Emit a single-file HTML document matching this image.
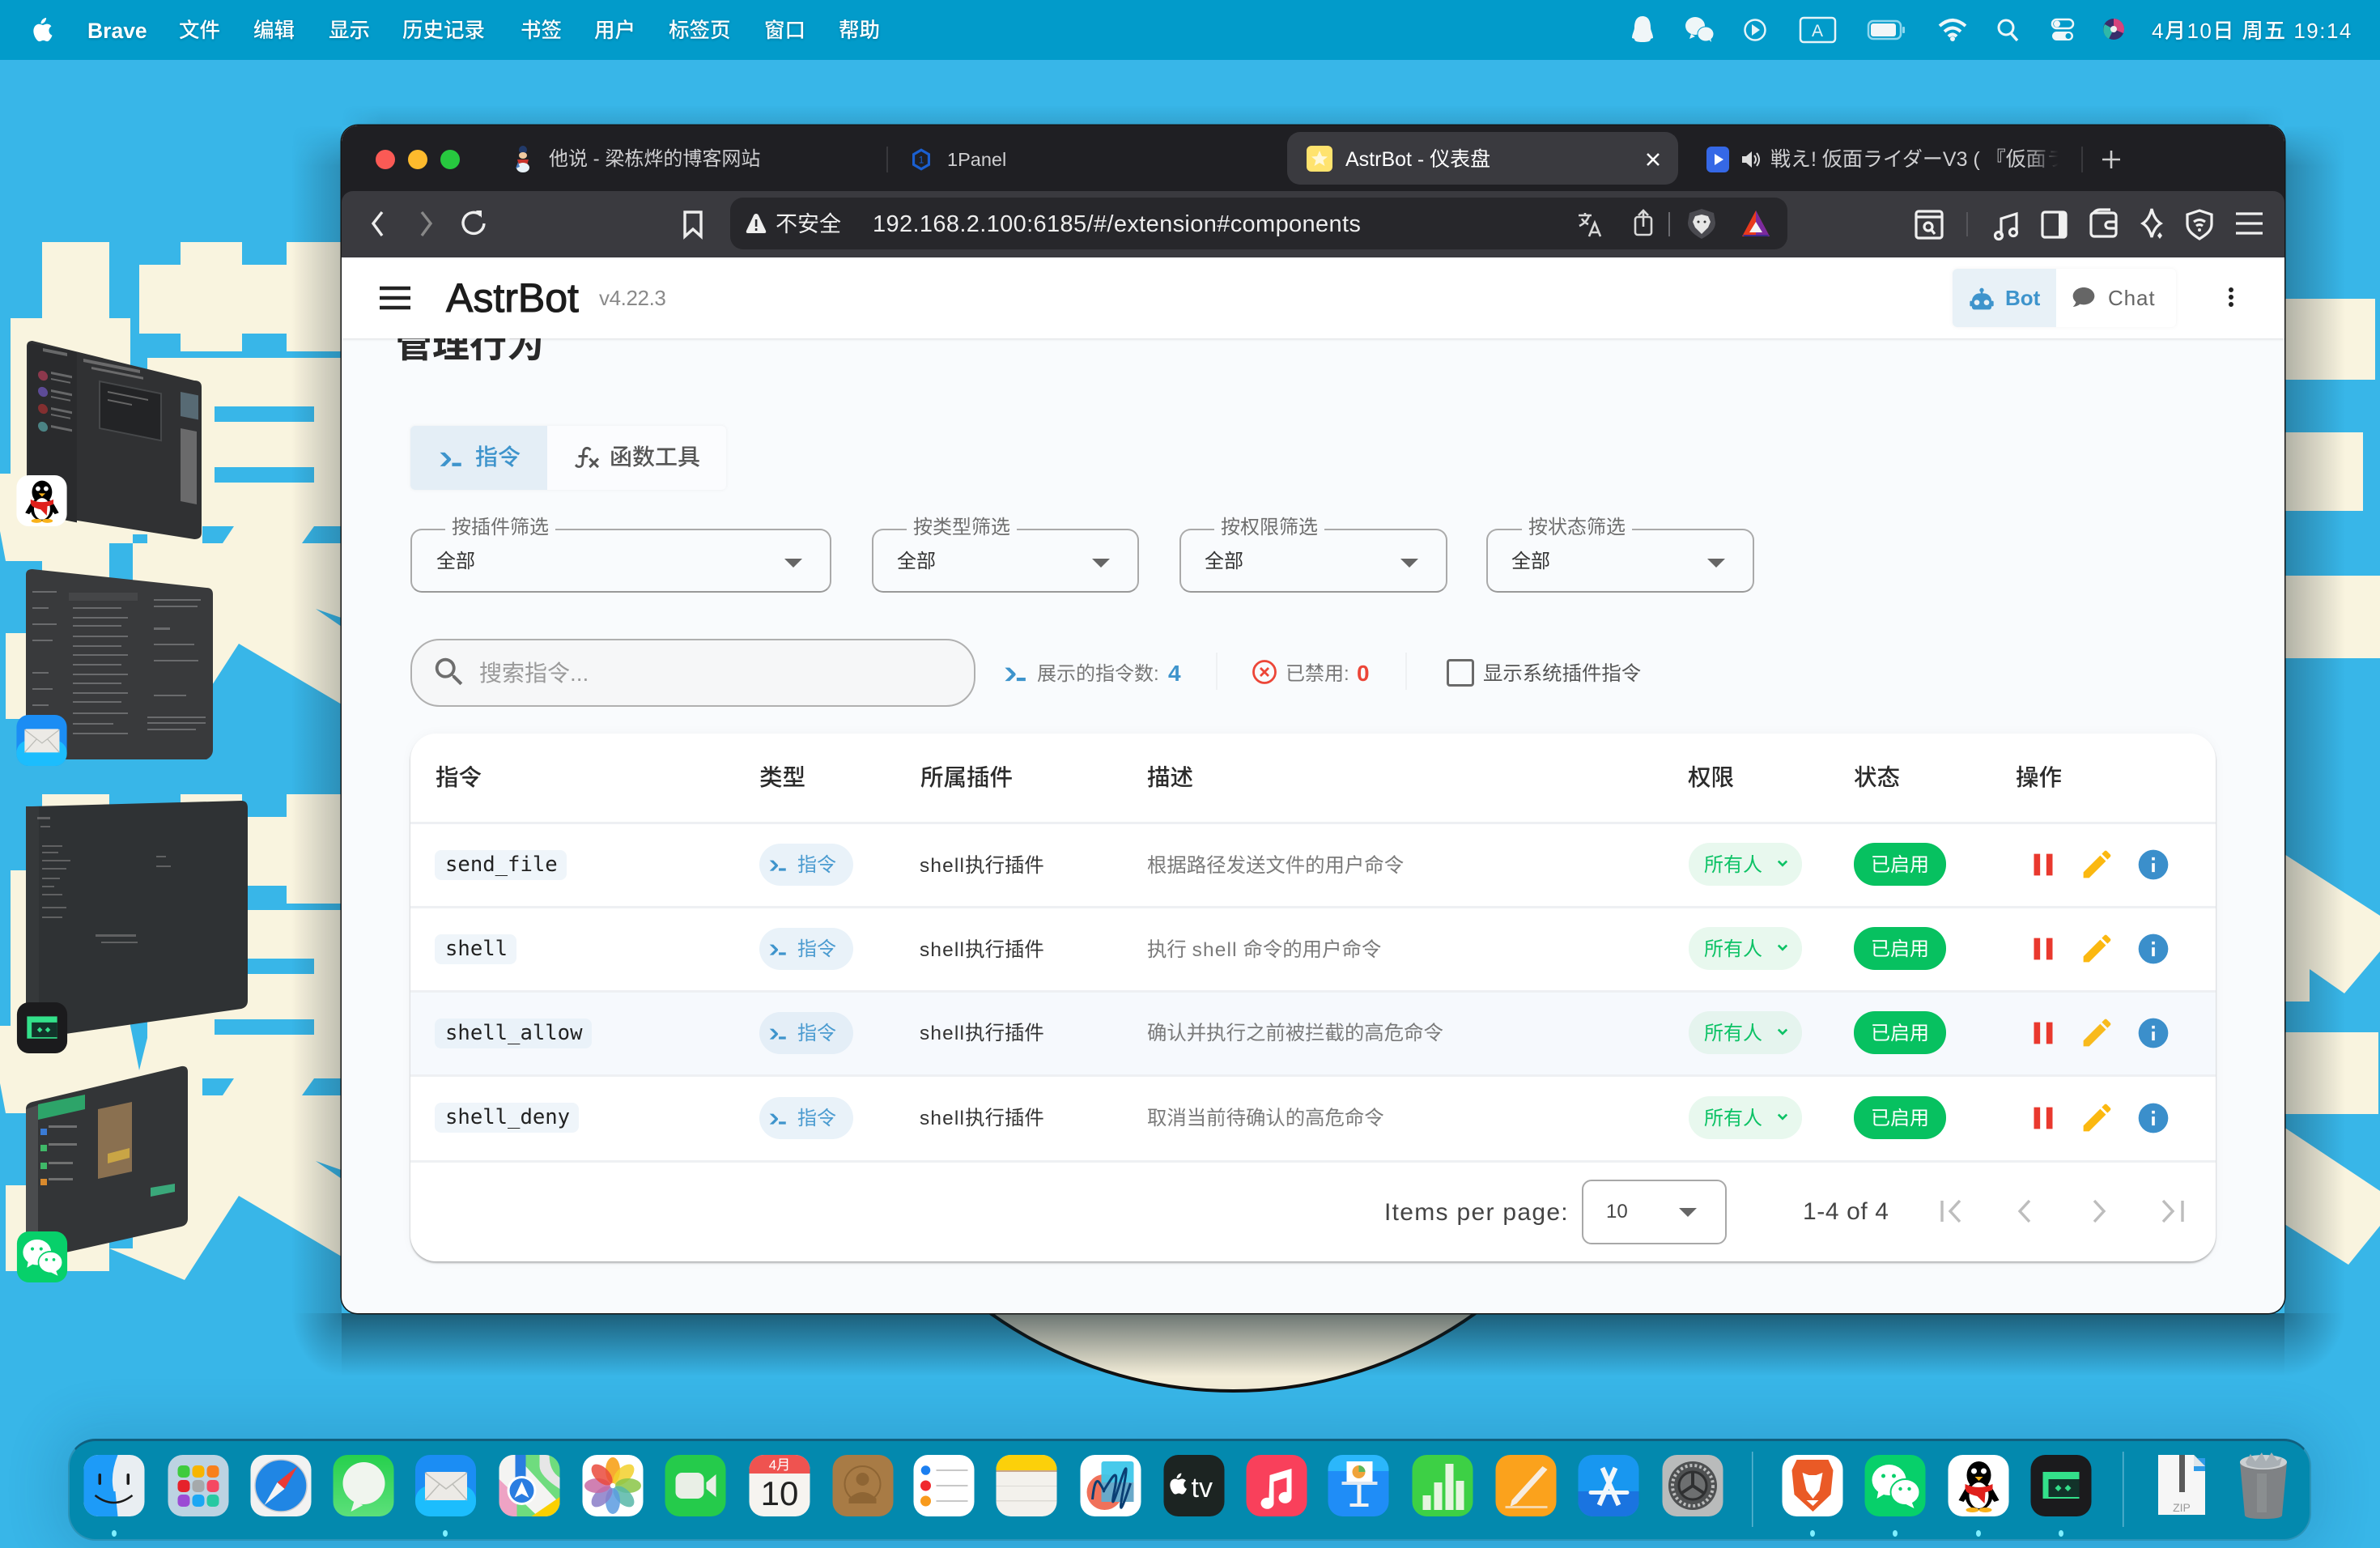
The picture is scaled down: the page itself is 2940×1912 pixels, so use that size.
<!DOCTYPE html>
<html lang="zh"><head><meta charset="utf-8"><title>AstrBot</title>
<style>
html,body{margin:0;padding:0;background:#38b6e8;}
body{position:relative;width:2940px;height:1912px;overflow:hidden;font-family:"Liberation Sans","Noto Sans CJK SC",sans-serif;}
.a{position:absolute;}
.t{position:absolute;white-space:nowrap;line-height:40px;height:40px;}
.mb{color:#fff;font-size:25.5px;font-weight:500;top:18px;text-shadow:0 1px 3px rgba(0,0,0,.25);}
.tab{font-size:24px;color:#cfcfd1;top:177px;}
.lbl{font-size:24px;color:#6f6f6f;top:635px;height:34px;line-height:34px;background:#f9fbfd;padding:0 8px;}
.val{font-size:24px;color:#333;top:674px;}
.sel{position:absolute;top:653px;height:79px;box-sizing:border-box;border:2px solid #aaa;border-bottom-color:#999;border-radius:14px;}
.arr{position:absolute;width:0;height:0;border-left:11px solid transparent;border-right:11px solid transparent;border-top:11px solid #666;top:690px;}
.th{font-size:28.5px;color:#2b2b2b;font-weight:500;top:941px;}
.code{position:absolute;height:37px;line-height:37px;background:#eff5fa;border-radius:8px;font-family:"DejaVu Sans Mono",monospace;font-size:25.6px;color:#222;padding:0 13px;box-sizing:border-box;left:537px;}
.chip{position:absolute;left:938px;width:116px;height:52px;border-radius:26px;background:#e9f2f9;color:#4a9bd0;font-size:24px;line-height:54px;}
.chip span{position:absolute;left:47px;top:0;}
.chip svg{position:absolute;left:10px;top:13px;}
.pl{font-size:24.4px;color:#333;left:1136px;}
.pl i{font-style:normal;letter-spacing:1.2px;}
.de{font-size:24.4px;color:#7a7a7a;left:1417px;}
.perm{position:absolute;left:2086px;width:140px;height:53px;border-radius:26px;background:#e8f8ee;color:#0cc265;font-size:24px;line-height:55px;}
.perm span{position:absolute;left:19px;top:0;}
.perm svg{position:absolute;left:108px;top:20px;}
.st{position:absolute;left:2290px;width:114px;height:53px;border-radius:26px;background:#07c160;color:#fff;font-size:24px;line-height:55px;text-align:center;}
.ic{position:absolute;}
.hl{position:absolute;left:507px;width:2230px;height:3px;background:#eef0f3;}
</style></head><body>

<svg width="0" height="0" style="position:absolute"><defs>
<symbol id="console" viewBox="0 0 24 24"><path d="M13,19V16H21V19H13M8.5,13L2.47,7H6.71L11.67,11.95C12.25,12.54 12.25,13.5 11.67,14.07L6.74,19H2.5L8.5,13Z"/></symbol>
<symbol id="pause" viewBox="0 0 24 24"><path d="M14,19H18V5H14M6,19H10V5H6V19Z"/></symbol>
<symbol id="pencil" viewBox="0 0 24 24"><path d="M20.71,7.04C21.1,6.65 21.1,6 20.71,5.63L18.37,3.29C18,2.9 17.35,2.9 16.96,3.29L15.12,5.12L18.87,8.87M3,17.25V21H6.75L17.81,9.93L14.06,6.18L3,17.25Z"/></symbol>
<symbol id="info" viewBox="0 0 24 24"><path d="M13,9H11V7H13M13,17H11V11H13M12,2A10,10 0 0,0 2,12A10,10 0 0,0 12,22A10,10 0 0,0 22,12A10,10 0 0,0 12,2Z"/></symbol>
<symbol id="chev" viewBox="0 0 12 10"><path d="M2 2l4 4 4-4" fill="none" stroke="#0cc265" stroke-width="2"/></symbol>
<symbol id="apple" viewBox="0 0 24 24"><path d="M12.2 5.3c.8-1 1.3-2.2 1.2-3.3-1.1 0-2.4.7-3.2 1.6-.7.8-1.3 2.1-1.2 3.2 1.2.1 2.4-.6 3.2-1.5zM15.6 12.4c0-2.3 1.9-3.4 2-3.5-1.1-1.6-2.8-1.8-3.4-1.8-1.4-.1-2.8.9-3.5.9-.7 0-1.9-.8-3.1-.8-1.6 0-3.1.9-3.9 2.4-1.7 2.9-.4 7.1 1.2 9.5.8 1.1 1.7 2.4 3 2.3 1.2 0 1.7-.8 3.1-.8 1.5 0 1.9.8 3.1.8 1.3 0 2.1-1.1 2.9-2.3.9-1.3 1.3-2.6 1.3-2.7-.1 0-2.7-1-2.7-4z"/></symbol>
<symbol id="qq" viewBox="0 0 75 76"><rect width="75" height="76" rx="18" fill="#fff"/><ellipse cx="38" cy="25" rx="15" ry="17" fill="#000"/><ellipse cx="38" cy="50" rx="17" ry="18" fill="#000"/><ellipse cx="38" cy="50" rx="12" ry="16" fill="#fff"/><path d="M21 36q17 8 34 0l0 7q-6 3-9 3l-1 14-9-9q-10-2-15-7z" fill="#e0201c"/><path d="M33 27h10l-5 5z" fill="#f9b21a"/><circle cx="32" cy="20" r="3.5" fill="#fff"/><circle cx="44" cy="20" r="3.5" fill="#fff"/><path d="M21 42l-8 14 6 2 6-8zM55 42l8 14-6 2-6-8z" fill="#000"/><ellipse cx="30" cy="68" rx="8" ry="3" fill="#f9b21a"/><ellipse cx="46" cy="68" rx="8" ry="3" fill="#f9b21a"/></symbol>
<symbol id="wechat" viewBox="0 0 75 76"><rect width="75" height="76" rx="18" fill="#07d06a"/><ellipse cx="30" cy="31" rx="21" ry="19" fill="#fff"/><path d="M17 44l-2 10 10-6z" fill="#fff"/><ellipse cx="50" cy="46" rx="18" ry="16" fill="#fff" stroke="#07d06a" stroke-width="2"/><path d="M58 58l3 8-10-5z" fill="#fff"/><circle cx="23" cy="26" r="2.5" fill="#07d06a"/><circle cx="36" cy="26" r="2.5" fill="#07d06a"/><circle cx="44" cy="42" r="2.2" fill="#07d06a"/><circle cx="55" cy="42" r="2.2" fill="#07d06a"/></symbol>
<symbol id="mail" viewBox="0 0 75 76"><rect width="75" height="76" rx="18" fill="#1b8df4"/><rect y="38" width="75" height="38" rx="18" fill="#1cbdfd"/><rect x="12" y="21" width="52" height="35" rx="3" fill="#eceae6"/><path d="M12 22l26 20 26-20M12 56l18-20M64 56l-18-20" fill="none" stroke="#bdbdb8" stroke-width="1.5"/></symbol>
<symbol id="term" viewBox="0 0 75 76"><rect width="75" height="76" rx="18" fill="#1b1b1d"/><rect x="15" y="21" width="45" height="33" fill="#33e08a"/><rect x="22" y="30" width="38" height="22" fill="#12332a"/><path d="M30 41l4-4 4 4-4 4zM42 41l4-4 4 4-4 4z" fill="#33e08a"/></symbol>
</defs></svg>

<!-- WALLPAPER -->
<svg class="a" style="left:0;top:0" width="2940" height="1912" viewBox="0 0 2940 1912">
<defs>
<g id="sec" fill="#f9f4df">
<rect x="52" y="299" width="83" height="100"/>
<rect x="13" y="393" width="148" height="192"/>
<path d="M0 585H161L172 640L182 600V660H164V671H135V720H52V693H7L0 656Z"/>
<rect x="52" y="660" width="83" height="60"/>
<rect x="7" y="782" width="128" height="106"/>
<path d="M135 860L228 899L295 795L422 870V671H164V860Z"/>
<rect x="172" y="327" width="260" height="85"/>
<rect x="223" y="299" width="76" height="135"/>
<rect x="354" y="299" width="80" height="135"/>
<rect x="182" y="442" width="250" height="230"/>
<g fill="#38b6e8">
<rect x="265" y="502" width="123" height="19"/>
<rect x="265" y="577" width="123" height="19"/>
<path d="M250 650H289L275 671H250Z"/>
<path d="M388 650H430V671H373Z"/>
<path d="M390 752L430 766V774H422Z"/>
</g>
</g>
</defs>
<rect width="2940" height="1912" fill="#38b6e8"/>
<use href="#sec"/>
<use href="#sec" y="682"/>
<g fill="#f9f4df">
<rect x="2800" y="369" width="134" height="100"/>
<rect x="2800" y="534" width="119" height="97"/>
<rect x="2800" y="711" width="140" height="102"/>
<path d="M2800 1041L2940 1131V1175L2896 1227L2853 1197V1237H2800Z"/>
<rect x="2800" y="1275" width="138" height="101"/>
<path d="M2800 1378L2940 1471V1514L2901 1562L2800 1498Z"/>
</g>
<circle cx="1523" cy="1203" r="515" fill="#f3edd8" stroke="#111" stroke-width="4"/>

<!-- stage manager thumbnails -->
<path d="M40 421Q33 421 33 428V633L240 666Q249 666 249 658V478Q249 470 240 470Z" fill="#303133"/>
<g transform="matrix(1 .2 0 1 33 421)">
<rect x="2" y="2" width="60" height="210" fill="#2a2b2d"/>
<g fill="#9a9a9a" opacity=".55">
<rect x="20" y="5" width="30" height="4"/><circle cx="20" cy="39" r="6" fill="#d46"/><rect x="30" y="32" width="26" height="3"/><rect x="30" y="40" width="24" height="2"/>
<circle cx="20" cy="59" r="6" fill="#86e"/><rect x="30" y="54" width="26" height="3"/><rect x="30" y="62" width="24" height="2"/>
<circle cx="20" cy="80" r="6" fill="#c33"/><rect x="30" y="76" width="26" height="3"/><rect x="30" y="84" width="24" height="2"/>
<circle cx="20" cy="102" r="6" fill="#6cc"/><rect x="30" y="98" width="26" height="3"/>
<rect x="70" y="8" width="70" height="4"/><rect x="80" y="16" width="64" height="3"/>
<rect x="190" y="25" width="22" height="30" fill="#79a"/><rect x="190" y="70" width="20" height="90"/>
</g>
<rect x="90" y="32" width="76" height="58" fill="#232426" stroke="#46484a" stroke-width="2"/>
<rect x="100" y="42" width="50" height="2" fill="#666"/>
<rect x="100" y="52" width="30" height="2" fill="#666"/>
</g>
<path d="M40 703Q32 703 32 710V938H255Q263 934 263 926V734Q263 726 255 726Z" fill="#393a3c"/>
<g fill="#8b8d8f" opacity=".6">
<rect x="85" y="732" width="85" height="10" fill="#4d4f51"/>
<rect x="90" y="750" width="60" height="2"/><rect x="90" y="762" width="68" height="2"/><rect x="90" y="772" width="60" height="2"/><rect x="90" y="785" width="68" height="2"/><rect x="90" y="797" width="60" height="2"/><rect x="90" y="808" width="68" height="2"/><rect x="90" y="820" width="60" height="2"/><rect x="90" y="832" width="68" height="2"/><rect x="90" y="843" width="60" height="2"/><rect x="90" y="855" width="68" height="2"/><rect x="90" y="866" width="60" height="2"/><rect x="90" y="880" width="68" height="2"/><rect x="90" y="893" width="50" height="2"/><rect x="90" y="905" width="68" height="2"/>
<rect x="190" y="740" width="58" height="2"/><rect x="190" y="748" width="54" height="2"/><rect x="190" y="775" width="20" height="3"/><rect x="190" y="795" width="50" height="2"/><rect x="190" y="815" width="55" height="2"/><rect x="190" y="858" width="40" height="2"/><rect x="182" y="885" width="72" height="2"/><rect x="182" y="892" width="72" height="2"/><rect x="182" y="900" width="60" height="2"/>
<rect x="40" y="730" width="30" height="2"/><rect x="40" y="750" width="20" height="2"/><rect x="40" y="770" width="30" height="2"/><rect x="40" y="790" width="25" height="2"/><rect x="40" y="830" width="20" height="2"/><rect x="40" y="850" width="25" height="2"/><rect x="40" y="870" width="20" height="2"/>
</g>
<path d="M40 996Q32 996 32 1003V1284L298 1246Q306 1244 306 1236V998Q306 989 298 989Z" fill="#2f3234"/>
<rect x="32" y="996" width="16" height="288" fill="#35383a"/>
<g fill="#888" opacity=".55">
<rect x="46" y="1009" width="16" height="3"/><rect x="50" y="1020" width="12" height="2"/><rect x="52" y="1044" width="25" height="2"/><rect x="52" y="1052" width="20" height="2"/><rect x="52" y="1062" width="35" height="2"/><rect x="52" y="1072" width="30" height="2"/><rect x="52" y="1084" width="22" height="2"/><rect x="52" y="1094" width="15" height="2"/><rect x="52" y="1104" width="25" height="2"/><rect x="52" y="1120" width="30" height="2"/><rect x="52" y="1132" width="25" height="2"/>
<rect x="118" y="1154" width="50" height="3"/><rect x="125" y="1163" width="45" height="2"/><rect x="193" y="1057" width="12" height="2"/><rect x="193" y="1069" width="18" height="2"/>
</g>
<path d="M40 1361Q32 1363 32 1370V1558L224 1515Q232 1513 232 1505V1324Q232 1316 224 1317Z" fill="#333537"/>
<path d="M32 1370L47 1365V1553L32 1558Z" fill="#4a4c4e"/>
<path d="M47 1364L105 1352V1370L47 1383Z" fill="#2da469"/>
<path d="M121 1370L163 1361V1447L121 1456Z" fill="#8a7050"/>
<path d="M133 1425L160 1418V1430L133 1437Z" fill="#c9a545"/>
<path d="M186 1467L216 1462V1472L186 1478Z" fill="#3aa87a"/>
<g fill="#999" opacity=".6"><rect x="60" y="1390" width="35" height="3"/><rect x="60" y="1412" width="35" height="3"/><rect x="60" y="1435" width="30" height="3"/><rect x="60" y="1455" width="30" height="3"/></g>
<g><rect x="50" y="1394" width="8" height="8" fill="#3a7bd5"/><rect x="50" y="1414" width="8" height="8" fill="#3fb868"/><rect x="50" y="1436" width="8" height="8" fill="#3fb868"/><rect x="50" y="1456" width="8" height="8" fill="#d98a2d"/></g>
<use href="#qq" x="20" y="587" width="63" height="63"/>
<use href="#mail" x="20" y="883" width="63" height="63"/>
<use href="#term" x="20" y="1238" width="64" height="63"/>
<use href="#wechat" x="20" y="1521" width="64" height="63"/>
</svg>

<!-- MENU BAR -->
<div class="a" style="left:0;top:0;width:2940px;height:74px;background:#029bca"></div>
<svg class="ic" style="left:37px;top:18px;fill:#fff" width="36" height="38"><use href="#apple"/></svg>
<div class="t mb" style="left:108px;font-weight:700;font-size:26.5px">Brave</div>
<div class="t mb" style="left:221px">文件</div>
<div class="t mb" style="left:313px">编辑</div>
<div class="t mb" style="left:406px">显示</div>
<div class="t mb" style="left:497px">历史记录</div>
<div class="t mb" style="left:643px">书签</div>
<div class="t mb" style="left:734px">用户</div>
<div class="t mb" style="left:826px">标签页</div>
<div class="t mb" style="left:944px">窗口</div>
<div class="t mb" style="left:1036px">帮助</div>
<svg class="a" style="left:2000px;top:10px" width="660" height="56" viewBox="2000 10 660 56">
<path d="M2029 20c7 0 10 6 10 14 0 4 3 8 3 13l-3 1c0 3-3 4-10 4s-10-1-10-4l-3-1c0-5 3-9 3-13 0-8 3-14 10-14z" fill="#f0f6f8"/>
<ellipse cx="2094" cy="32" rx="12" ry="11" fill="#eef6f8"/><ellipse cx="2107" cy="42" rx="10" ry="9" fill="#eef6f8" stroke="#029bca"/>
<path d="M2089 42l-2 6 7-3M2111 49l3 3-1-6" fill="#eef6f8"/>
<circle cx="2168" cy="37" r="12.5" fill="none" stroke="#e6f4f8" stroke-width="2.5"/><path d="M2164 30l10 7-10 7z" fill="#e6f4f8"/>
<rect x="2224" y="22" width="43" height="30" rx="4" fill="none" stroke="#e6f4f8" stroke-width="2.5"/><text x="2245" y="45" font-size="21" fill="#e6f4f8" text-anchor="middle" font-family="Liberation Sans">A</text>
<rect x="2308" y="26" width="40" height="22" rx="6" fill="none" stroke="#8fd7ee" stroke-width="2.5"/><rect x="2311" y="29" width="31" height="16" rx="3" fill="#f0f6f8"/><rect x="2350" y="33" width="3" height="8" rx="1" fill="#8fd7ee"/>
<path d="M2396 32q16-14 32 0M2402 39q10-9 20 0M2407 45q5-5 10 0" fill="none" stroke="#f0f6f8" stroke-width="4"/><circle cx="2412" cy="48" r="3" fill="#f0f6f8"/>
<circle cx="2478" cy="34" r="9" fill="none" stroke="#f0f6f8" stroke-width="3"/><path d="M2484 41l8 9" stroke="#f0f6f8" stroke-width="3.5"/>
<rect x="2535" y="24" width="26" height="11" rx="5.5" fill="none" stroke="#f0f6f8" stroke-width="2.5"/><circle cx="2541" cy="29.5" r="4" fill="#f0f6f8"/><rect x="2535" y="39" width="26" height="11" rx="5.5" fill="#f0f6f8"/><circle cx="2555" cy="44.5" r="3.5" fill="#029bca"/>
<circle cx="2611" cy="36" r="13" fill="#3a2d6b"/><path d="M2611 23a13 13 0 0 1 12 18l-12-5z" fill="#d6447c"/><path d="M2600 30a13 13 0 0 0 5 18l6-12z" fill="#2fb8a8"/><circle cx="2611" cy="36" r="4" fill="#eee"/>
</svg>
<div class="t mb" style="left:2658px;font-size:26px;letter-spacing:1.5px">4月10日 周五 19:14</div>

<!-- WINDOW SHADOW (soft-ended gradients) -->
<div class="a" style="left:422px;top:1622px;width:2400px;height:78px;background:linear-gradient(180deg,rgba(8,30,40,.58),rgba(8,30,40,0))"></div>
<div class="a" style="left:360px;top:155px;width:62px;height:1467px;background:linear-gradient(270deg,rgba(8,20,30,.24),rgba(8,20,30,0));-webkit-mask-image:linear-gradient(180deg,transparent,#000 50px);mask-image:linear-gradient(180deg,transparent,#000 50px)"></div>
<div class="a" style="left:2822px;top:155px;width:75px;height:1467px;background:linear-gradient(90deg,rgba(8,20,30,.3),rgba(8,20,30,0));-webkit-mask-image:linear-gradient(180deg,transparent,#000 50px);mask-image:linear-gradient(180deg,transparent,#000 50px)"></div>
<div class="a" style="left:360px;top:1622px;width:62px;height:78px;background:radial-gradient(ellipse 62px 78px at 100% 0,rgba(8,25,35,.38),rgba(8,25,35,0))"></div>
<div class="a" style="left:2822px;top:1622px;width:75px;height:78px;background:radial-gradient(ellipse 75px 78px at 0 0,rgba(8,25,35,.42),rgba(8,25,35,0))"></div>
<div class="a" style="left:422px;top:130px;width:2400px;height:25px;background:linear-gradient(0deg,rgba(8,20,30,.12),rgba(8,20,30,0));-webkit-mask-image:linear-gradient(90deg,transparent,#000 50px,#000 calc(100% - 50px),transparent);mask-image:linear-gradient(90deg,transparent,#000 50px,#000 calc(100% - 50px),transparent)"></div>

<!-- WINDOW -->
<div class="a" style="left:422px;top:155px;width:2400px;height:1467px;border-radius:20px;box-shadow:0 0 0 1.5px #151515;"></div>
<div class="a" style="left:422px;top:155px;width:2400px;height:1467px;border-radius:20px;overflow:hidden;background:#f9fbfd;">
<div class="a" style="left:-422px;top:-155px;width:2940px;height:1912px;">

<div class="a" style="left:422px;top:155px;width:2400px;height:110px;background:#1f1f23"></div>
<div class="a" style="left:422px;top:236px;width:2400px;height:82px;background:#3a3a3f;border-radius:14px 14px 0 0"></div>
<div class="a" style="left:464px;top:185px;width:24px;height:24px;border-radius:50%;background:#fb5a55"></div>
<div class="a" style="left:504px;top:185px;width:24px;height:24px;border-radius:50%;background:#fdba2d"></div>
<div class="a" style="left:544px;top:185px;width:24px;height:24px;border-radius:50%;background:#27c83f"></div>

<svg class="a" style="left:632px;top:178px" width="28" height="36" viewBox="0 0 28 36"><circle cx="14" cy="7" r="5" fill="#223a6a"/><ellipse cx="14" cy="14" rx="5" ry="4" fill="#f0c9a0"/><path d="M7 19h14l-2 7H9z" fill="#c8342c"/><ellipse cx="14" cy="29" rx="8" ry="6" fill="#e8f2f8"/><path d="M8 22l-3 8 5-2z" fill="#4a7ec0"/></svg>
<div class="t tab" style="left:678px">他说 - 梁栋烨的博客网站</div>
<div class="a" style="left:1095px;top:181px;width:2px;height:32px;background:#38383c"></div>
<svg class="a" style="left:1127px;top:181px" width="22" height="32" viewBox="0 0 28 34"><path d="M14 2L26 9V25L14 32L2 25V9Z" fill="none" stroke="#1a5fd0" stroke-width="4"/><text x="14" y="23" font-size="15" fill="#1a5fd0" text-anchor="middle" font-family="Liberation Sans">1</text></svg>
<div class="t tab" style="left:1170px;font-size:23.5px">1Panel</div>

<div class="a" style="left:1590px;top:163px;width:483px;height:65px;background:#3a3a3f;border-radius:16px"></div>
<svg class="a" style="left:1614px;top:180px" width="32" height="32" viewBox="0 0 32 32"><rect width="32" height="32" rx="6" fill="#ffe36e"/><path d="M16 6l3 7 7 .5-5.5 4.5 2 7-6.500-4-6.500 4 2-7L6 13.500l7-.5z" fill="#fff8d8"/></svg>
<div class="t tab" style="left:1662px;color:#fff;font-size:25px">AstrBot - 仪表盘</div>
<svg class="a" style="left:2033px;top:187px" width="18" height="20"><path d="M2 3l14 14M16 3L2 17" stroke="#fff" stroke-width="2.6"/></svg>

<svg class="a" style="left:2108px;top:181px" width="28" height="32" viewBox="0 0 28 32"><rect width="28" height="32" rx="6" fill="#3568e6"/><path d="M10 9l11 7-11 7z" fill="#fff"/></svg>
<svg class="a" style="left:2150px;top:184px" width="26" height="26" viewBox="0 0 26 26"><path d="M2 9h5l7-6v20l-7-6H2z" fill="#ddd"/><path d="M17 8q4 5 0 10M20 5q6 8 0 16" fill="none" stroke="#ddd" stroke-width="2"/></svg>
<div class="t tab" style="left:2187px;width:356px;overflow:hidden;font-size:25px;-webkit-mask-image:linear-gradient(90deg,#000 88%,transparent);mask-image:linear-gradient(90deg,#000 88%,transparent);font-family:'Liberation Sans','Noto Sans CJK JP',sans-serif">戦え! 仮面ライダーV3 ( 『仮面ライダー</div>
<div class="a" style="left:2571px;top:181px;width:2px;height:32px;background:#38383c"></div>
<svg class="a" style="left:2596px;top:184px" width="24" height="26"><path d="M12 2v22M1 13h22" stroke="#ccc" stroke-width="2.600"/></svg>

<!-- toolbar icons -->
<svg class="a" style="left:422px;top:236px" width="2400" height="82" viewBox="422 236 2400 82">
<path d="M472 262l-11 14 11 15" fill="none" stroke="#eee" stroke-width="3.400"/>
<path d="M521 262l11 14-11 15" fill="none" stroke="#888" stroke-width="3.400"/>
<path d="M594 266a13 13 0 1 0 4 10" fill="none" stroke="#eee" stroke-width="3.400"/><path d="M588 260h7v9z" fill="#eee"/>
<path d="M846 262h20v30l-10-9-10 9z" fill="none" stroke="#eee" stroke-width="3.400"/>
</svg>
<div class="a" style="left:902px;top:244px;width:1306px;height:64px;background:#27272b;border-radius:16px"></div>
<svg class="a" style="left:920px;top:262px" width="28" height="28" viewBox="0 0 28 28"><path d="M14 2q2 0 3 2l9 19q1 3-2 3H4q-3 0-2-3l9-19q1-2 3-2z" fill="#eee"/><rect x="12.800" y="9" width="2.600" height="9" fill="#27272b"/><rect x="12.800" y="20" width="2.600" height="3" fill="#27272b"/></svg>
<div class="t" style="left:958px;top:257px;font-size:27px;color:#f0f0f0">不安全</div>
<div class="t" style="left:1078px;top:257px;font-size:29px;color:#eee;letter-spacing:.36px">192.168.2.100:6185/#/extension#components</div>

<svg class="a" style="left:1940px;top:240px" width="880" height="74" viewBox="1940 240 880 74">
<g fill="none" stroke="#d8d8d8" stroke-width="2.600">
<path d="M1950 266h16M1958 263v3M1963 266q-3 9-12 13M1954 270q3 5 8 7"/><path d="M1963 292l7-17 7 17M1965.500 287h9"/>
<rect x="2020" y="268" width="20" height="22" rx="3"/><path d="M2030 280v-19M2024 266l6-6 6 6"/>
</g>
<rect x="2061" y="262" width="2" height="30" fill="#6b6b70"/>
<path d="M2102 258l15 5 2 12c0 9-8 15-17 20-9-5-17-11-17-20l2-12z" fill="#4a4a50"/>
<path d="M2102 265l8 2 3 7-3 7-8 8-8-8-3-7 3-7z" fill="#e6e6e6"/><circle cx="2098" cy="274" r="1.500" fill="#333"/><circle cx="2106" cy="274" r="1.500" fill="#333"/>
<path d="M2169 260l17 32h-34z" fill="#e8391d"/><path d="M2169 260l17 32h-17z" fill="#7b2a9e"/><path d="M2169 274l8 13h-16z" fill="#f5f5f5"/><path d="M2155 292h28l3-2h-34z" fill="#3d2a8e"/>
<g fill="none" stroke="#f0f0f0" stroke-width="3.200">
<rect x="2367" y="261" width="32" height="33" rx="3"/><path d="M2367 268h32"/><circle cx="2382" cy="280" r="5"/><path d="M2386 284l4 5"/>
<path d="M2472 291v-21l19-6v22"/><circle cx="2469" cy="291" r="4.500"/><circle cx="2487" cy="287" r="4.500"/>
<rect x="2523" y="262" width="29" height="31" rx="3"/>
<rect x="2583" y="263" width="31" height="29" rx="4"/><path d="M2614 274h-9a3 3 0 0 0 0 8h9M2586 263q3-4 8-4h13"/>
<path d="M2658 258q3 13 11 18-8 5-11 17-3-12-11-17 8-5 11-18z"/>
<path d="M2717 260l15 5v12c0 8-7 13-15 18-8-5-15-10-15-18v-12z"/><path d="M2710 274q7-5 14 0M2713 279q4-3 8 0"/>
<path d="M2762 264h33M2762 276h33M2762 288h33"/>
</g>
<rect x="2429" y="262" width="2" height="30" fill="#55555a"/>
<rect x="2543" y="262" width="9" height="31" fill="#f0f0f0"/>
<path d="M2668 287l3 4-3 4-3-4z" fill="#f0f0f0"/>
<circle cx="2717" cy="284" r="2" fill="#f0f0f0"/>
</svg>

<!-- page content -->
<div class="t" style="left:488px;top:400px;font-size:46px;font-weight:700;color:#2a2a2a;height:50px;line-height:50px">管理行为</div>

<!-- app header -->
<div class="a" style="left:422px;top:318px;width:2400px;height:100px;background:#fff;box-shadow:0 1px 3px rgba(0,0,0,.12)"></div>
<svg class="a" style="left:469px;top:352px" width="38" height="32"><path d="M0 4h38M0 16h38M0 28h38" stroke="#222" stroke-width="4.500"/></svg>
<div class="t" style="left:551px;top:343px;height:50px;line-height:50px;font-size:50px;color:#1c1c1c;-webkit-text-stroke:1.1px #1c1c1c">AstrBot</div>
<div class="t" style="left:740px;top:348px;font-size:26px;color:#8a8a8a;letter-spacing:-.4px">v4.22.3</div>
<div class="a" style="left:2412px;top:332px;width:276px;height:72px;background:#fff;border-radius:6px;box-shadow:0 0 6px rgba(0,0,0,.05)"></div>
<div class="a" style="left:2412px;top:332px;width:128px;height:72px;background:#e8f1f7;border-radius:6px 0 0 6px"></div>
<svg class="a" style="left:2432px;top:353px;fill:#3e94cc" width="32" height="32" viewBox="0 0 24 24"><path fill-rule="evenodd" d="M12,2A2,2 0 0,1 14,4C14,4.740 13.600,5.390 13,5.730V7H14A7,7 0 0,1 21,14H22A1,1 0 0,1 23,15V18A1,1 0 0,1 22,19H21V20A2,2 0 0,1 19,22H5A2,2 0 0,1 3,20V19H2A1,1 0 0,1 1,18V15A1,1 0 0,1 2,14H3A7,7 0 0,1 10,7H11V5.730C10.400,5.390 10,4.740 10,4A2,2 0 0,1 12,2M7.500,13A2.500,2.500 0 0,0 5,15.500A2.500,2.500 0 0,0 7.500,18A2.500,2.500 0 0,0 10,15.500A2.500,2.500 0 0,0 7.500,13M16.500,13A2.500,2.500 0 0,0 14,15.500A2.500,2.500 0 0,0 16.500,18A2.500,2.500 0 0,0 19,15.500A2.500,2.500 0 0,0 16.500,13Z"/></svg>
<div class="t" style="left:2477px;top:348px;font-size:26px;color:#3e94cc;font-weight:700">Bot</div>
<svg class="a" style="left:2558px;top:351px;fill:#666" width="32" height="32" viewBox="0 0 24 24"><path d="M12,3C17.500,3 22,6.580 22,11C22,15.420 17.500,19 12,19C10.760,19 9.570,18.820 8.470,18.500C5.550,21 2,21 2,21C4.330,18.670 4.700,17.100 4.750,16.500C3.050,15.070 2,13.130 2,11C2,6.580 6.500,3 12,3Z"/></svg>
<div class="t" style="left:2604px;top:348px;font-size:26px;color:#666;letter-spacing:.9px">Chat</div>
<svg class="a" style="left:2738px;top:349px;fill:#222" width="36" height="36" viewBox="0 0 24 24"><path d="M12,16A2,2 0 0,1 14,18A2,2 0 0,1 12,20A2,2 0 0,1 10,18A2,2 0 0,1 12,16M12,10A2,2 0 0,1 14,12A2,2 0 0,1 12,14A2,2 0 0,1 10,12A2,2 0 0,1 12,10M12,4A2,2 0 0,1 14,6A2,2 0 0,1 12,8A2,2 0 0,1 10,6A2,2 0 0,1 12,4Z"/></svg>

<!-- tabs -->
<div class="a" style="left:507px;top:526px;width:390px;height:79px;background:#fbfcfe;border-radius:6px;box-shadow:0 0 5px rgba(0,0,0,.06)"></div>
<div class="a" style="left:507px;top:526px;width:169px;height:79px;background:#e4eef6;border-radius:6px 0 0 6px"></div>
<svg class="a" style="left:540px;top:549px;fill:#3e94cc" width="34" height="34"><use href="#console"/></svg>
<div class="t" style="left:587px;top:545px;font-size:28px;color:#3e94cc;font-weight:500">指令</div>
<svg class="a" style="left:707px;top:547px;fill:#555" width="36" height="36" viewBox="0 0 24 24"><path d="M12.420,5.290C11.320,5.190 10.350,6 10.250,7.110L10,10H12.820V12H9.820L9.380,17.070C9.180,19.270 7.240,20.800 5.040,20.600C3.790,20.500 2.660,19.810 2,18.740L3.500,17.240C3.830,18.380 5.150,19.060 6.290,18.730C7.080,18.500 7.410,17.750 7.500,16.900L7.820,12H5V10H8L8.260,6.930C8.450,4.730 10.390,3.100 12.600,3.300C13.850,3.410 14.980,4.100 15.640,5.170L14.140,6.670C13.810,5.860 13.200,5.360 12.420,5.290M22,13.650L20.590,12.240L17.760,15.070L14.930,12.240L13.500,13.650L16.350,16.500L13.500,19.310L14.930,20.720L17.760,17.890L20.590,20.720L22,19.310L19.170,16.500L22,13.650Z"/></svg>
<div class="t" style="left:753px;top:545px;font-size:28px;color:#555;font-weight:500">函数工具</div>

<!-- selects -->
<div class="sel" style="left:507px;width:520px"></div><div class="t lbl" style="left:550px">按插件筛选</div><div class="t val" style="left:539px">全部</div><div class="arr" style="left:969px"></div>
<div class="sel" style="left:1077px;width:330px"></div><div class="t lbl" style="left:1120px">按类型筛选</div><div class="t val" style="left:1108px">全部</div><div class="arr" style="left:1349px"></div>
<div class="sel" style="left:1457px;width:331px"></div><div class="t lbl" style="left:1500px">按权限筛选</div><div class="t val" style="left:1488px">全部</div><div class="arr" style="left:1730px"></div>
<div class="sel" style="left:1836px;width:331px"></div><div class="t lbl" style="left:1880px">按状态筛选</div><div class="t val" style="left:1867px">全部</div><div class="arr" style="left:2109px"></div>

<!-- search -->
<div class="a" style="left:507px;top:789px;width:698px;height:84px;box-sizing:border-box;border:2.500px solid #b0b0b0;border-radius:36px;background:#f6f7f8"></div>
<svg class="a" style="left:532px;top:807px;fill:#6e6e6e" width="46" height="46" viewBox="0 0 24 24"><path d="M9.500,3A6.500,6.500 0 0,1 16,9.500C16,11.110 15.410,12.590 14.440,13.730L14.710,14H15.500L20.500,19L19,20.500L14,15.500V14.710L13.730,14.440C12.590,15.410 11.110,16 9.500,16A6.500,6.500 0 0,1 3,9.500A6.500,6.500 0 0,1 9.500,3M9.500,5C7,5 5,7 5,9.500C5,12 7,14 9.500,14C12,14 14,12 14,9.500C14,7 12,5 9.500,5Z"/></svg>
<div class="t" style="left:592px;top:812px;font-size:28px;color:#9a9a9a">搜索指令...</div>

<!-- stats -->
<svg class="a" style="left:1238px;top:815px;fill:#3e94cc" width="33" height="33"><use href="#console"/></svg>
<div class="t" style="left:1281px;top:813px;font-size:24px;color:#777">展示的指令数:</div>
<div class="t" style="left:1443px;top:812px;font-size:28px;color:#3e94cc;font-weight:700">4</div>
<div class="a" style="left:1502px;top:806px;width:2px;height:46px;background:#eff1f3"></div>
<svg class="a" style="left:1546px;top:814px" width="32" height="32" viewBox="0 0 32 32"><circle cx="16" cy="16" r="13.500" fill="none" stroke="#ec4638" stroke-width="2.800"/><path d="M11 11l10 10M21 11L11 21" stroke="#ec4638" stroke-width="2.800"/></svg>
<div class="t" style="left:1588px;top:813px;font-size:24px;color:#777">已禁用:</div>
<div class="t" style="left:1676px;top:812px;font-size:28px;color:#ec4638;font-weight:700">0</div>
<div class="a" style="left:1736px;top:806px;width:2px;height:46px;background:#eff1f3"></div>
<div class="a" style="left:1787px;top:814px;width:34px;height:34px;box-sizing:border-box;border:3.500px solid #6a6a6a;border-radius:4px"></div>
<div class="t" style="left:1832px;top:813px;font-size:24.400px;color:#555">显示系统插件指令</div>

<!-- table card -->
<div class="a" style="left:507px;top:906px;width:2230px;height:652px;background:#fff;border-radius:32px;box-shadow:0 2px 2px rgba(0,0,0,.28),0 0 14px rgba(0,0,0,.035)"></div>
<div class="t th" style="left:538px">指令</div>
<div class="t th" style="left:938px">类型</div>
<div class="t th" style="left:1137px">所属插件</div>
<div class="t th" style="left:1417px">描述</div>
<div class="t th" style="left:2085px">权限</div>
<div class="t th" style="left:2290px">状态</div>
<div class="t th" style="left:2490px">操作</div>

<div class="a" style="left:507px;top:1225px;width:2230px;height:103px;background:#f6f9fd"></div>
<div class="hl" style="top:1015px"></div>
<div class="hl" style="top:1119px"></div>
<div class="hl" style="top:1223px"></div>
<div class="hl" style="top:1327px"></div>
<div class="hl" style="top:1433px"></div>

<!-- row 1 -->
<div class="code" style="top:1050px;width:163px">send_file</div>
<div class="chip" style="top:1042px"><svg width="26" height="26" fill="#3e94cc"><use href="#console"/></svg><span>指令</span></div>
<div class="t pl" style="top:1050px"><i>shell</i>执行插件</div>
<div class="t de" style="top:1050px">根据路径发送文件的用户命令</div>
<div class="perm" style="top:1041px"><span>所有人</span><svg width="16" height="13"><use href="#chev"/></svg></div>
<div class="st" style="top:1041px">已启用</div>
<svg class="ic" style="left:2501px;top:1045px;fill:#e9392e" width="46" height="46"><use href="#pause"/></svg>
<svg class="ic" style="left:2568px;top:1045px;fill:#fbb810" width="45" height="45"><use href="#pencil"/></svg>
<svg class="ic" style="left:2638px;top:1046px;fill:#3b8fcb" width="44" height="44"><use href="#info"/></svg>
<!-- row 2 -->
<div class="code" style="top:1154px;width:101px">shell</div>
<div class="chip" style="top:1146px"><svg width="26" height="26" fill="#3e94cc"><use href="#console"/></svg><span>指令</span></div>
<div class="t pl" style="top:1154px"><i>shell</i>执行插件</div>
<div class="t de" style="top:1154px">执行 <span style="letter-spacing:1.2px">shell</span> 命令的用户命令</div>
<div class="perm" style="top:1145px"><span>所有人</span><svg width="16" height="13"><use href="#chev"/></svg></div>
<div class="st" style="top:1145px">已启用</div>
<svg class="ic" style="left:2501px;top:1149px;fill:#e9392e" width="46" height="46"><use href="#pause"/></svg>
<svg class="ic" style="left:2568px;top:1149px;fill:#fbb810" width="45" height="45"><use href="#pencil"/></svg>
<svg class="ic" style="left:2638px;top:1150px;fill:#3b8fcb" width="44" height="44"><use href="#info"/></svg>
<!-- row 3 -->
<div class="code" style="top:1258px;width:194px;background:#eaf2f9">shell_allow</div>
<div class="chip" style="top:1250px;background:#e4eef7"><svg width="26" height="26" fill="#3e94cc"><use href="#console"/></svg><span>指令</span></div>
<div class="t pl" style="top:1257px"><i>shell</i>执行插件</div>
<div class="t de" style="top:1257px">确认并执行之前被拦截的高危命令</div>
<div class="perm" style="top:1249px;background:#e5f4ee"><span>所有人</span><svg width="16" height="13"><use href="#chev"/></svg></div>
<div class="st" style="top:1249px">已启用</div>
<svg class="ic" style="left:2501px;top:1253px;fill:#e9392e" width="46" height="46"><use href="#pause"/></svg>
<svg class="ic" style="left:2568px;top:1253px;fill:#f8ba1d" width="45" height="45"><use href="#pencil"/></svg>
<svg class="ic" style="left:2638px;top:1254px;fill:#3b8fcb" width="44" height="44"><use href="#info"/></svg>
<!-- row 4 -->
<div class="code" style="top:1362px;width:178px">shell_deny</div>
<div class="chip" style="top:1355px"><svg width="26" height="26" fill="#3e94cc"><use href="#console"/></svg><span>指令</span></div>
<div class="t pl" style="top:1362px"><i>shell</i>执行插件</div>
<div class="t de" style="top:1362px">取消当前待确认的高危命令</div>
<div class="perm" style="top:1354px"><span>所有人</span><svg width="16" height="13"><use href="#chev"/></svg></div>
<div class="st" style="top:1354px">已启用</div>
<svg class="ic" style="left:2501px;top:1358px;fill:#e9392e" width="46" height="46"><use href="#pause"/></svg>
<svg class="ic" style="left:2568px;top:1358px;fill:#fbb810" width="45" height="45"><use href="#pencil"/></svg>
<svg class="ic" style="left:2638px;top:1359px;fill:#3b8fcb" width="44" height="44"><use href="#info"/></svg>

<!-- footer -->
<div class="t" style="left:1710px;top:1478px;font-size:30px;color:#444;letter-spacing:1.300px">Items per page:</div>
<div class="a" style="left:1954px;top:1457px;width:179px;height:80px;box-sizing:border-box;border:2px solid #a8a8a8;border-radius:12px;background:#fff"></div>
<div class="t" style="left:1984px;top:1477px;font-size:24px;color:#444">10</div>
<div class="arr" style="left:2074px;top:1492px"></div>
<div class="t" style="left:2227px;top:1477px;font-size:30px;color:#444;letter-spacing:.6px">1-4 of 4</div>
<svg class="a" style="left:2390px;top:1476px" width="320" height="40" viewBox="2390 1476 320 40" fill="none" stroke="#bdbdbd" stroke-width="3.400">
<path d="M2399 1483v26M2421 1483l-12 13 12 13"/>
<path d="M2507 1483l-12 13 12 13"/>
<path d="M2587 1483l12 13-12 13"/>
<path d="M2672 1483l12 13-12 13M2696 1483v26"/>
</svg>

</div></div>

<!-- DOCK -->
<div class="a" style="left:84px;top:1777px;width:2771px;height:126px;box-sizing:border-box;background:#0389ae;border-radius:34px;border:2px solid #2a93b8;border-top:3px solid #10607f;box-shadow:0 0 60px 20px rgba(0,60,100,.14)"></div>
<svg class="a" style="left:0;top:1790px" width="2940" height="122" viewBox="0 1790 2940 122">
<defs><clipPath id="ck"><rect width="75" height="76" rx="18"/></clipPath>
<linearGradient id="cg1" x1="0" y1="0" x2="0" y2="1"><stop offset="0" stop-color="#26d04d"/><stop offset="1" stop-color="#5ce07a"/></linearGradient></defs>

<g transform="translate(103.500,1797)" clip-path="url(#ck)"><rect width="75" height="76" fill="#e9eef2"/><path d="M0 0h42q-10 25-5 45h2l3 31H0z" fill="#1d9bf8"/><rect x="18" y="23" width="3.500" height="14" rx="1.700" fill="#1a1a1a"/><rect x="53" y="23" width="3.500" height="14" rx="1.700" fill="#1a1a1a"/><path d="M14 50q23 18 46 0" fill="none" stroke="#1a1a1a" stroke-width="2.500"/></g>

<g transform="translate(207.500,1797)" clip-path="url(#ck)"><rect width="75" height="76" fill="#bcd3e2"/><rect x="12" y="13" width="15" height="15" rx="5" fill="#3ecb3e"/><rect x="30" y="13" width="15" height="15" rx="5" fill="#f7b500"/><rect x="48" y="13" width="15" height="15" rx="5" fill="#f8801c"/><rect x="12" y="31" width="15" height="15" rx="5" fill="#e6222b"/><rect x="30" y="31" width="15" height="15" rx="5" fill="#a5a9ab"/><rect x="48" y="31" width="15" height="15" rx="5" fill="#f54862"/><rect x="12" y="49" width="15" height="15" rx="5" fill="#9b4bd4"/><rect x="30" y="49" width="15" height="15" rx="5" fill="#1ba7f3"/><rect x="48" y="49" width="15" height="15" rx="5" fill="#27c9a2"/></g>

<g transform="translate(309.500,1797)" clip-path="url(#ck)"><rect width="75" height="76" fill="#f2f2f2"/><circle cx="37.500" cy="38" r="32" fill="#2086e4" stroke="#c9ccd0" stroke-width="1.500"/><path d="M58 14L33 34l9 8z" fill="#ec3a35"/><path d="M17 62L33 34l9 8z" fill="#f4f4f4"/></g>

<g transform="translate(411.500,1797)" clip-path="url(#ck)"><rect width="75" height="76" fill="url(#cg1)"/><ellipse cx="38" cy="35" rx="26" ry="26" fill="#f0f5ee"/><path d="M26 57l-4 13 15-8z" fill="#f0f5ee"/></g>

<use href="#mail" x="513" y="1797" width="75" height="76"/>

<g transform="translate(616.500,1797)" clip-path="url(#ck)"><rect width="75" height="76" fill="#6fdc7e"/><path d="M0 0h22v76H0z" fill="#eea3c4"/><path d="M48 76L0 30V0h20l55 60v16z" fill="#f4f4f2"/><rect x="20" y="0" width="13" height="50" fill="#2a7de1"/><path d="M50 0v14q0 12 25 28v-14q-13-8-13-28z" fill="#e6e6e6"/><path d="M40 76l35-24v24z" fill="#fbd000"/><circle cx="28" cy="44" r="18" fill="#fff"/><circle cx="28" cy="44" r="15" fill="#2a7de1"/><path d="M28 33l9 20-9-5-9 5z" fill="#fff"/></g>

<g transform="translate(719.500,1797)" clip-path="url(#ck)"><rect width="75" height="76" fill="#fff"/><g transform="translate(37.500,38)"><ellipse cy="-19" rx="9" ry="16" fill="#f7a21b" opacity=".9"/><ellipse cy="-19" rx="9" ry="16" fill="#f2d02b" opacity=".85" transform="rotate(45)"/><ellipse cy="-19" rx="9" ry="16" fill="#8ac546" opacity=".85" transform="rotate(90)"/><ellipse cy="-19" rx="9" ry="16" fill="#57b7a8" opacity=".85" transform="rotate(135)"/><ellipse cy="-19" rx="9" ry="16" fill="#5b9be0" opacity=".85" transform="rotate(180)"/><ellipse cy="-19" rx="9" ry="16" fill="#8a7cc8" opacity=".85" transform="rotate(225)"/><ellipse cy="-19" rx="9" ry="16" fill="#c86aa5" opacity=".85" transform="rotate(270)"/><ellipse cy="-19" rx="9" ry="16" fill="#ea4a3c" opacity=".85" transform="rotate(315)"/></g></g>

<g transform="translate(821.500,1797)" clip-path="url(#ck)"><rect width="75" height="76" fill="#25cb4b"/><rect x="13" y="22" width="35" height="32" rx="8" fill="#e9efe6"/><path d="M51 34l12-10v28l-12-10z" fill="#e9efe6"/></g>

<g transform="translate(925.500,1797)" clip-path="url(#ck)"><rect width="75" height="76" fill="#f6f4f0"/><rect width="75" height="23" fill="#ef5350"/><text x="37.500" y="18" font-size="17" fill="#fff" text-anchor="middle" font-family="Liberation Sans,Noto Sans CJK SC,sans-serif">4月</text><text x="37.500" y="62" font-size="42" fill="#222" text-anchor="middle" font-family="Liberation Sans,sans-serif">10</text></g>

<g transform="translate(1028.500,1797)" clip-path="url(#ck)"><rect width="75" height="76" fill="#a87b45"/><circle cx="37" cy="36" r="22" fill="none" stroke="#8e6534" stroke-width="2"/><circle cx="37" cy="30" r="8" fill="#8e6534"/><path d="M20 54q17-16 34 0v6H20z" fill="#8e6534"/></g>

<g transform="translate(1128.500,1797)" clip-path="url(#ck)"><rect width="75" height="76" fill="#fff"/><circle cx="15" cy="19" r="6.500" fill="#1c7ff0" stroke="#fff" stroke-width="1.500"/><circle cx="15" cy="38" r="6.500" fill="#f0292e"/><circle cx="15" cy="57" r="6.500" fill="#f89a1c"/><rect x="28" y="18" width="39" height="2" fill="#c8c8c8"/><rect x="28" y="37" width="39" height="2" fill="#c8c8c8"/><rect x="28" y="56" width="39" height="2" fill="#c8c8c8"/></g>

<g transform="translate(1230.500,1797)" clip-path="url(#ck)"><rect width="75" height="76" fill="#f3f1ec"/><rect width="75" height="19" fill="#fcd00a"/><rect y="19" width="75" height="2" fill="#c9a78a"/><rect y="38" width="75" height="1" fill="#dcdad4"/><rect y="56" width="75" height="1.500" fill="#dcdad4"/></g>

<g transform="translate(1334.500,1797)" clip-path="url(#ck)"><rect width="75" height="76" fill="#fff"/><circle cx="30" cy="46" r="22" fill="#f0715a"/><rect x="26" y="8" width="40" height="50" rx="3" fill="#3ec7ea" opacity=".95"/><rect x="26" y="34" width="40" height="24" fill="#69a9c9"/><path d="M15 55q3-30 9-20t5 10 9-15 4 15 7-10 4 8 9-8" fill="none" stroke="#0a3f74" stroke-width="3"/></g>

<g transform="translate(1437.500,1797)" clip-path="url(#ck)"><rect width="75" height="76" fill="#1c2422"/><use href="#apple" x="4" y="20" width="32" height="32" fill="#fff"/><text x="34" y="52" font-size="34" fill="#fff" font-family="Liberation Sans,sans-serif">tv</text></g>

<g transform="translate(1539.500,1797)" clip-path="url(#ck)"><rect width="75" height="76" fill="#f9405b"/><path d="M29 25l27-8v36a8 7 0 1 1-6-7V28l-16 5v27a8 7 0 1 1-6-7z" fill="#fff"/></g>

<g transform="translate(1640.500,1797)" clip-path="url(#ck)"><rect width="75" height="76" fill="#1f8df7"/><rect y="0" width="75" height="20" fill="#2bb7fb"/><rect x="23" y="8" width="32" height="28" fill="#fff"/><circle cx="38" cy="21" r="8" fill="#f0a33a"/><path d="M38 13v8h8a8 8 0 0 0-8-8z" fill="#5bb85b"/><rect x="17" y="33" width="44" height="4" fill="#dfe8f2"/><rect x="36" y="37" width="5" height="23" fill="#f2f2f2"/><rect x="27" y="60" width="23" height="4" fill="#f2f2f2"/></g>

<g transform="translate(1744.500,1797)" clip-path="url(#ck)"><rect width="75" height="76" fill="#3dd045"/><rect x="13" y="50" width="10" height="18" fill="#e6f5e0"/><rect x="27" y="34" width="10" height="34" fill="#e6f5e0"/><rect x="41" y="11" width="10" height="57" fill="#e6f5e0"/><rect x="54" y="32" width="10" height="36" fill="#e6f5e0"/></g>

<g transform="translate(1847.500,1797)" clip-path="url(#ck)"><rect width="75" height="76" fill="#fba21c"/><path d="M58 14l6 4-38 42-8 4 2-8z" fill="#f7ecdf"/><rect x="12" y="63" width="52" height="3" fill="#f7d7a8"/></g>

<g transform="translate(1949.500,1797)" clip-path="url(#ck)"><rect width="75" height="76" fill="#1897f0"/><rect y="45" width="75" height="31" fill="#1a74e0"/><path d="M26 62l20-46M50 62L30 16" fill="none" stroke="#f2f7fb" stroke-width="6"/><rect x="13" y="44" width="50" height="5" rx="2.500" fill="#f2f7fb"/></g>

<g transform="translate(2053.500,1797)" clip-path="url(#ck)"><rect width="75" height="76" fill="#b9bbbb"/><circle cx="37.500" cy="38" r="30" fill="#4f5152"/><circle cx="37.500" cy="38" r="25" fill="none" stroke="#bcbdbd" stroke-width="4" stroke-dasharray="3 3"/><circle cx="37.500" cy="38" r="17" fill="#6d6f70" stroke="#2f3031" stroke-width="3"/><path d="M37.500 38v-17M37.500 38l15 10M37.500 38l-15 10" stroke="#2f3031" stroke-width="4"/></g>

<rect x="2164" y="1793" width="1.500" height="93" fill="#5db4d0"/>

<g transform="translate(2201.500,1797)" clip-path="url(#ck)"><rect width="75" height="76" fill="#fff"/><path d="M18 6h39l6 13-3 30-22 21-23-21-3-30z" fill="#ea5a26"/><path d="M25 22l8 3h9l8-3-4 22-8 10-8-10z" fill="#fff"/><path d="M30 56h15l-7 7z" fill="#fff"/></g>

<use href="#wechat" x="2303.500" y="1797" width="75" height="76"/>
<use href="#qq" x="2406.500" y="1797" width="75" height="76"/>
<use href="#term" x="2508.500" y="1797" width="75" height="76"/>

<rect x="2622" y="1793" width="1.500" height="93" fill="#5db4d0"/>

<g transform="translate(2666,1797)"><path d="M0 0h44l14 14v60H0z" fill="#f6f6f6"/><path d="M44 4h14v16H44z" fill="#2f9be8"/><path d="M44 0v14h14z" fill="#dfe6ea"/><rect x="26" y="0" width="7" height="46" fill="#5a5a5a"/><text x="29" y="70" font-size="14" fill="#999" text-anchor="middle" font-family="Liberation Sans,sans-serif">ZIP</text></g>

<g transform="translate(2766,1790)"><path d="M1 16q29-18 58 0l-6 66q-2 4-23 4t-23-4z" fill="#7f8285"/><ellipse cx="30" cy="16" rx="29" ry="9" fill="#ccd0d2"/><path d="M8 16l6-10 6 9 8-11 5 11 7-11 7 10 6-4-3 10q-20 7-40 0z" fill="#a9b0b5"/><rect x="22" y="30" width="12" height="48" fill="#95999c" opacity=".5"/></g>

<g fill="#7fefff"><ellipse cx="141" cy="1894" rx="3" ry="4"/><ellipse cx="550" cy="1894" rx="3" ry="4"/><ellipse cx="2239" cy="1894" rx="3" ry="4"/><ellipse cx="2341" cy="1894" rx="3" ry="4"/><ellipse cx="2444" cy="1894" rx="3" ry="4"/><ellipse cx="2546" cy="1894" rx="3" ry="4"/></g>
</svg>

</body></html>
